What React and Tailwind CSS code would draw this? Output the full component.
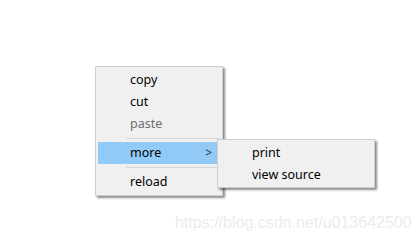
export default function App() {
  const font = { fontFamily: '"Noto Sans", "Liberation Sans", sans-serif' };

  return (
    <div className="relative w-[420px] h-[242px] bg-white overflow-hidden" style={font}>
      {/* main context menu */}
      <div className="absolute left-[95px] top-[66px] w-[128px] h-[130px] bg-[#f0f0f0] border border-[#cfcfcf] shadow-[2px_2px_2px_rgba(0,0,0,0.45)] pt-[2px] px-[2px] text-[12.5px] text-black">
        <div className="h-[22px] flex items-center pl-[32px]">copy</div>
        <div className="h-[22px] flex items-center pl-[32px]">cut</div>
        <div className="h-[22px] flex items-center pl-[32px] text-[#6d6d6d]">paste</div>
        <div className="h-[7px] flex items-center pl-[28px]">
          <div className="h-px w-full bg-[#d7d7d7]" />
        </div>
        <div className="h-[22px] flex items-center pl-[32px] pr-[8px] bg-[#91c9f7]">
          <span className="flex-1">more</span>
          <span className="text-[12px] leading-none text-[#333]">&gt;</span>
        </div>
        <div className="h-[7px] flex items-center pl-[28px]">
          <div className="h-px w-full bg-[#d7d7d7]" />
        </div>
        <div className="h-[22px] flex items-center pl-[32px]">reload</div>
      </div>

      {/* submenu */}
      <div className="absolute left-[217px] top-[139px] w-[158px] h-[49px] bg-[#f0f0f0] border border-[#cfcfcf] shadow-[2px_2px_2px_rgba(0,0,0,0.45)] pt-[2px] px-[2px] text-[12.5px] text-black">
        <div className="h-[22px] flex items-center pl-[32px]">print</div>
        <div className="h-[22px] flex items-center pl-[32px]">view source</div>
      </div>

      {/* watermark */}
      <div
        className="absolute left-[175px] top-[211px] text-[16px] leading-[24px] text-[#ececec]"
        style={{ fontFamily: '"Liberation Sans", Arial, sans-serif' }}
      >
        https://blog.csdn.net/u013642500
      </div>
    </div>
  );
}
